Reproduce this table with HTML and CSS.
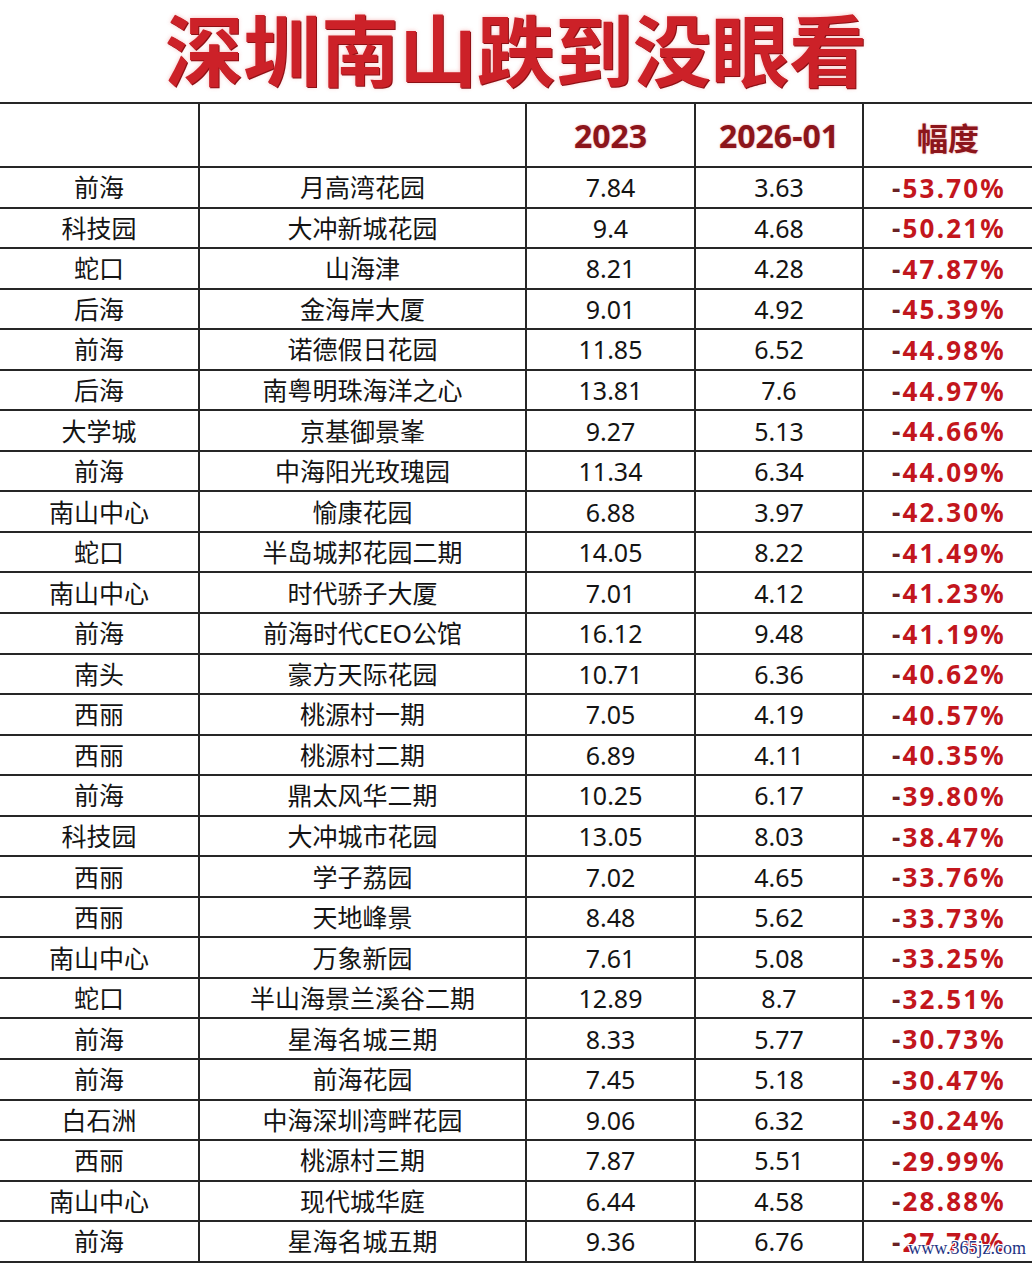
FILE: index.html
```html
<!DOCTYPE html>
<html lang="zh-CN">
<head>
<meta charset="utf-8">
<title>深圳南山跌到没眼看</title>
<link rel="stylesheet" href="styles.css">
</head>
<body>
<div class="page">
  <h1 class="title">深圳南山跌到没眼看</h1>
  <div class="table">
    <div class="cell head"></div>
    <div class="cell head"></div>
    <div class="cell head num">2023</div>
    <div class="cell head num">2026-01</div>
    <div class="cell head cjk last">幅度</div>

    <div class="cell">前海</div><div class="cell">月高湾花园</div><div class="cell num">7.84</div><div class="cell num">3.63</div><div class="cell pct last"><span class="minus">-</span>53.70%</div>
    <div class="cell">科技园</div><div class="cell">大冲新城花园</div><div class="cell num">9.4</div><div class="cell num">4.68</div><div class="cell pct last"><span class="minus">-</span>50.21%</div>
    <div class="cell">蛇口</div><div class="cell">山海津</div><div class="cell num">8.21</div><div class="cell num">4.28</div><div class="cell pct last"><span class="minus">-</span>47.87%</div>
    <div class="cell">后海</div><div class="cell">金海岸大厦</div><div class="cell num">9.01</div><div class="cell num">4.92</div><div class="cell pct last"><span class="minus">-</span>45.39%</div>
    <div class="cell">前海</div><div class="cell">诺德假日花园</div><div class="cell num">11.85</div><div class="cell num">6.52</div><div class="cell pct last"><span class="minus">-</span>44.98%</div>
    <div class="cell">后海</div><div class="cell">南粤明珠海洋之心</div><div class="cell num">13.81</div><div class="cell num">7.6</div><div class="cell pct last"><span class="minus">-</span>44.97%</div>
    <div class="cell">大学城</div><div class="cell">京基御景峯</div><div class="cell num">9.27</div><div class="cell num">5.13</div><div class="cell pct last"><span class="minus">-</span>44.66%</div>
    <div class="cell">前海</div><div class="cell">中海阳光玫瑰园</div><div class="cell num">11.34</div><div class="cell num">6.34</div><div class="cell pct last"><span class="minus">-</span>44.09%</div>
    <div class="cell">南山中心</div><div class="cell">愉康花园</div><div class="cell num">6.88</div><div class="cell num">3.97</div><div class="cell pct last"><span class="minus">-</span>42.30%</div>
    <div class="cell">蛇口</div><div class="cell">半岛城邦花园二期</div><div class="cell num">14.05</div><div class="cell num">8.22</div><div class="cell pct last"><span class="minus">-</span>41.49%</div>
    <div class="cell">南山中心</div><div class="cell">时代骄子大厦</div><div class="cell num">7.01</div><div class="cell num">4.12</div><div class="cell pct last"><span class="minus">-</span>41.23%</div>
    <div class="cell">前海</div><div class="cell">前海时代CEO公馆</div><div class="cell num">16.12</div><div class="cell num">9.48</div><div class="cell pct last"><span class="minus">-</span>41.19%</div>
    <div class="cell">南头</div><div class="cell">豪方天际花园</div><div class="cell num">10.71</div><div class="cell num">6.36</div><div class="cell pct last"><span class="minus">-</span>40.62%</div>
    <div class="cell">西丽</div><div class="cell">桃源村一期</div><div class="cell num">7.05</div><div class="cell num">4.19</div><div class="cell pct last"><span class="minus">-</span>40.57%</div>
    <div class="cell">西丽</div><div class="cell">桃源村二期</div><div class="cell num">6.89</div><div class="cell num">4.11</div><div class="cell pct last"><span class="minus">-</span>40.35%</div>
    <div class="cell">前海</div><div class="cell">鼎太风华二期</div><div class="cell num">10.25</div><div class="cell num">6.17</div><div class="cell pct last"><span class="minus">-</span>39.80%</div>
    <div class="cell">科技园</div><div class="cell">大冲城市花园</div><div class="cell num">13.05</div><div class="cell num">8.03</div><div class="cell pct last"><span class="minus">-</span>38.47%</div>
    <div class="cell">西丽</div><div class="cell">学子荔园</div><div class="cell num">7.02</div><div class="cell num">4.65</div><div class="cell pct last"><span class="minus">-</span>33.76%</div>
    <div class="cell">西丽</div><div class="cell">天地峰景</div><div class="cell num">8.48</div><div class="cell num">5.62</div><div class="cell pct last"><span class="minus">-</span>33.73%</div>
    <div class="cell">南山中心</div><div class="cell">万象新园</div><div class="cell num">7.61</div><div class="cell num">5.08</div><div class="cell pct last"><span class="minus">-</span>33.25%</div>
    <div class="cell">蛇口</div><div class="cell">半山海景兰溪谷二期</div><div class="cell num">12.89</div><div class="cell num">8.7</div><div class="cell pct last"><span class="minus">-</span>32.51%</div>
    <div class="cell">前海</div><div class="cell">星海名城三期</div><div class="cell num">8.33</div><div class="cell num">5.77</div><div class="cell pct last"><span class="minus">-</span>30.73%</div>
    <div class="cell">前海</div><div class="cell">前海花园</div><div class="cell num">7.45</div><div class="cell num">5.18</div><div class="cell pct last"><span class="minus">-</span>30.47%</div>
    <div class="cell">白石洲</div><div class="cell">中海深圳湾畔花园</div><div class="cell num">9.06</div><div class="cell num">6.32</div><div class="cell pct last"><span class="minus">-</span>30.24%</div>
    <div class="cell">西丽</div><div class="cell">桃源村三期</div><div class="cell num">7.87</div><div class="cell num">5.51</div><div class="cell pct last"><span class="minus">-</span>29.99%</div>
    <div class="cell">南山中心</div><div class="cell">现代城华庭</div><div class="cell num">6.44</div><div class="cell num">4.58</div><div class="cell pct last"><span class="minus">-</span>28.88%</div>
    <div class="cell">前海</div><div class="cell">星海名城五期</div><div class="cell num">9.36</div><div class="cell num">6.76</div><div class="cell pct last"><span class="minus">-</span>27.78%</div>
  </div>
  <div class="watermark">www.365jz.com</div>
</div>
</body>
</html>
```

FILE: styles.css
```css
html, body {
  margin: 0;
  padding: 0;
  background: #ffffff;
}

.page {
  position: relative;
  width: 1032px;
  height: 1265px;
  overflow: hidden;
  background: #ffffff;
  font-family: "Noto Sans", "Noto Sans CJK SC", sans-serif;
  color: #141414;
}

.title {
  margin: 0;
  padding: 2px 0 10px;
  text-align: center;
  font-family: "Noto Sans CJK SC", sans-serif;
  font-weight: 700;
  font-size: 78px;
  line-height: 90px;
  white-space: nowrap;
  color: #cc2128;
  text-shadow: 1px 1px 0 #8c1015, 0 0 4px rgba(230, 60, 60, 0.35);
}

.table {
  display: grid;
  grid-template-columns: 200px 327px 169px 168px 168px;
  grid-template-rows: 64px repeat(27, 40.56px);
  border-top: 2px solid #262626;
}

.cell {
  box-sizing: border-box;
  border-right: 2px solid #262626;
  border-bottom: 2px solid #262626;
  display: flex;
  align-items: center;
  justify-content: center;
  font-size: 25px;
  line-height: 1;
  white-space: nowrap;
  padding-top: 1px;
}

.cell.last {
  border-right: none;
}

.head {
  font-weight: 700;
  font-size: 32px;
  color: #8c151b;
  text-shadow: 0 0 2px rgba(225, 70, 70, 0.55);
  padding-top: 2px;
}

.head.cjk {
  font-family: "Noto Sans CJK SC", sans-serif;
  font-size: 31px;
  font-weight: 700;
}

.num {
  font-family: "Noto Sans", sans-serif;
}

.pct {
  font-family: "Noto Sans", sans-serif;
  font-weight: 700;
  font-size: 26px;
  letter-spacing: 2.2px;
  color: #c3161d;
  padding-left: 2px;
}

.minus {
  color: #6a2224;
}

.watermark {
  position: absolute;
  right: 6px;
  bottom: 8px;
  font-family: "Liberation Serif", serif;
  font-size: 18px;
  line-height: 1;
  color: #1f3585;
  text-shadow: 1px 0 0 #fff, -1px 0 0 #fff, 0 1px 0 #fff, 0 -1px 0 #fff, 1px 1px 0 #fff, -1px -1px 0 #fff, 1px -1px 0 #fff, -1px 1px 0 #fff;
}
```
